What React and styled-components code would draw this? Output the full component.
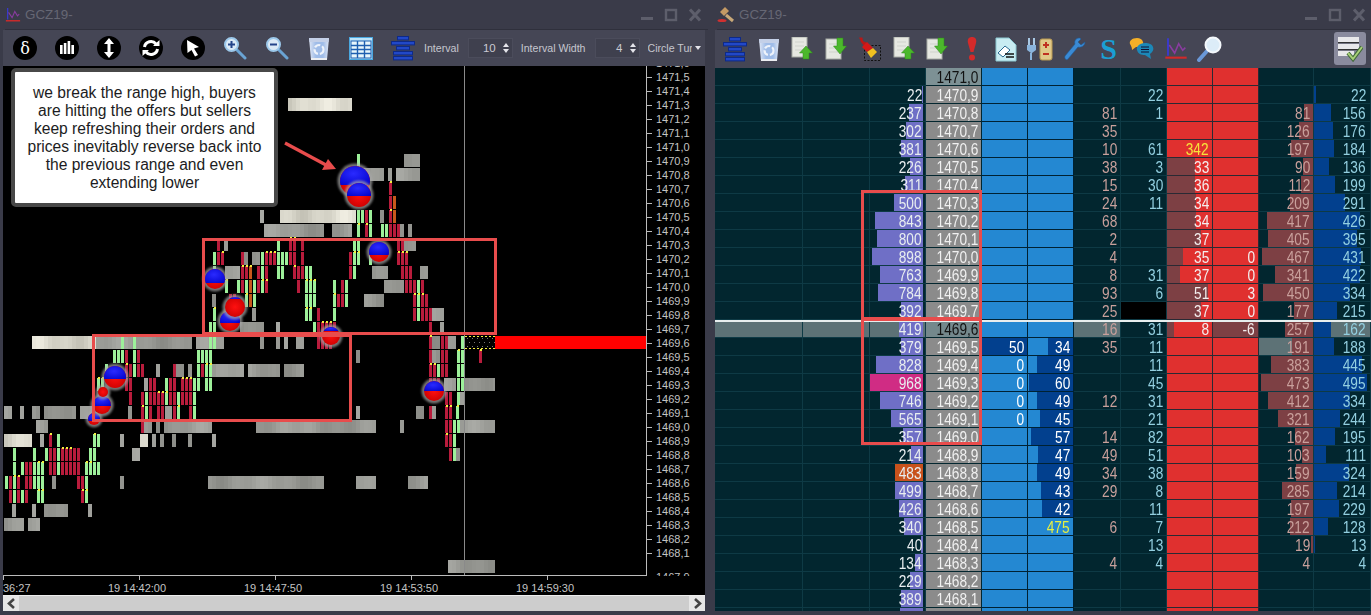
import React from 'react';
import styled, { createGlobalStyle } from 'styled-components';

const Global = createGlobalStyle`
  html, body { margin: 0; padding: 0; width: 1371px; height: 615px; overflow: hidden; background: #2e2f3b; }
  #root { width: 1371px; height: 615px; }
  * { box-sizing: border-box; }
`;

const UI = `"Liberation Sans", Arial, sans-serif`;

const Page = styled.div`display: flex; width: 1371px; height: 615px; font-family: ${UI};`;
const Win = styled.section`
  display: flex; flex-direction: column; height: 615px; background: #3a3b49;
  width: ${p => p.$w}px; padding: 0 ${p => p.$pr}px 4px ${p => p.$pl}px;
`;
const TitleBar = styled.header`
  display: flex; align-items: center; height: 30px; flex: none; margin-left: ${p => p.$ml}px;
  border-bottom: 1px solid #2f303c; margin-right: -3px;
`;
const TitleText = styled.span`font-size: 13.4px; color: #666774; margin-left: 4px;`;
const WinBtns = styled.div`display: flex; gap: 12px; margin-left: auto; margin-right: ${p => p.$mr}px; align-items: center;`;
const Toolbar = styled.div`
  display: flex; align-items: center; flex: none; height: ${p => p.$h}px; background: #454655;
  padding-left: ${p => p.$pl}px; position: relative;
`;
const Slot = styled.div`width: ${p => p.$w}px; flex: none; display: flex; align-items: center; justify-content: center;`;
const Round = styled.div`
  width: 24px; height: 24px; border-radius: 50%; background: #000; color: #fff; display: flex;
  align-items: center; justify-content: center; font: 16px "DejaVu Serif", serif;
`;
const Lbl = styled.span`font-size: 10.6px; color: #c6c7cf; margin-left: ${p => p.$ml}px; white-space: nowrap;`;
const Spin = styled.div`
  display: flex; align-items: center; justify-content: flex-end; width: 45px; height: 20px; margin-left: ${p => p.$ml}px;
  background: #3f404e; border: 1px solid #4b4c5b; font-size: 11.5px; color: #c9cad2; padding-right: 3px; gap: 7px;
`;
const SpinArrows = styled.span`display: flex; flex-direction: column; gap: 2px; align-items: center;`;
const Tri = styled.i`
  display: block; width: 0; height: 0; border-left: 3px solid transparent; border-right: 3px solid transparent;
  ${p => p.$up ? 'border-bottom: 4px solid #e4e4ea;' : 'border-top: 4px solid #e4e4ea;'}
`;
const Combo = styled.div`
  display: flex; align-items: center; margin-left: 8px; width: 53px; justify-content: space-between;
  font-size: 10.6px; color: #c6c7cf;
`;
const ComboText = styled.span`width: 44px; overflow: hidden; white-space: nowrap;`;
const ChartRow = styled.div`display: flex; height: 510px; flex: none; background: #000;`;
const Plot = styled.div`position: relative; width: 644px; height: 510px; flex: none; border-right: 1px solid #bbb; border-bottom: 1px solid #bbb;`;
const Axis = styled.div`flex: 1; overflow: hidden; height: 510px; position: relative;`;
const AxisList = styled.div`margin-top: -10px;`;
const AxisLab = styled.div`
  display: flex; align-items: center; height: 14px; font-size: 11px; color: #c4c4c4; white-space: nowrap;
  &::before { content: ''; width: 5px; height: 1px; background: #bbb; margin-right: 4px; }
`;
const Clip = styled.div`position: absolute; left: 0; bottom: 0; height: 6px; overflow: hidden;`;
const TimeAxis = styled.div`
  position: relative; height: 19px; flex: none; background: #000; font-size: 11px; color: #c4c4c4;
  display: grid; grid-template-columns: repeat(5, 136px); padding-top: 6px;
`;
const TimeTick = styled.div`
  white-space: nowrap; position: relative;
  &::before { content: ''; position: absolute; left: 0; top: -6px; width: 1px; height: 4px; background: #bbb; }
`;
const TimeText = styled.span`display: block; margin-left: ${p => p.$ml}px;`;
const Scroll = styled.div`
  height: 16px; flex: none; display: flex; justify-content: space-between; background: #cdcdcd; border-top: 1px solid #eee;
`;
const ScrollBtn = styled.div`width: 16px; display: flex; align-items: center; justify-content: center; background: #e6e6e6;`;
const Callout = styled.div`
  position: absolute; left: 8px; top: 2px; width: 267px; height: 139px; background: #fff; border: 4px solid #484848; border-radius: 5px;
  color: #1c1c22; font-size: 15.6px; line-height: 18px; text-align: center; padding: 12px 0 0; white-space: nowrap;
`;

const Ladder = styled.div`position: relative; flex: 1; overflow: hidden; background: #02262f;`;
const Row = styled.div`
  display: grid; height: 18px; position: relative;
  grid-template-columns: 88px 67px 56px 56px 46px 46px 47px 46px 46px 46px 55px 57px;
  ${p => p.$cur ? `&::after { content: ''; position: absolute; left: 0; right: 0; top: 0; height: 2px; background: #e8eeee; }` : ''}
`;
const Cell = styled.div`
  display: flex; align-items: center; justify-content: flex-end; padding-right: ${p => p.$pr ?? 3}px; overflow: hidden; white-space: nowrap;
  height: 18px; font-size: 16.5px; line-height: 18px;
  color: ${p => p.$c || '#e8eef0'};
  background-color: ${p => p.$bg || '#02262f'};
  background-repeat: no-repeat; background-image: ${p => p.$bar ? `linear-gradient(${p.$bar},${p.$bar})` : 'none'};
  background-position: ${p => p.$left ? 'left' : 'right'} top;
  border-right: 1px solid #0e3a45; border-bottom: 1px solid #0e3a45;
`;
const Num = styled.span`display: inline-block; transform: scaleX(.83); transform-origin: right center;`;
const Vol = styled(Cell)`background-position: right 2px top 0;`;
const Price = styled(Cell)`
  background-color: ${p => p.$top ? '#7d9195' : p.$cur ? '#74888c' : '#8b8b8b'}; color: ${p => p.$dark ? '#111' : '#f0f0f0'};
  border-right: 1px solid #02262f; border-bottom: 1px solid #02262f;
`;
const Blue = styled(Cell)`
  background-color: #2488d2; border-right: 1px solid #023; border-bottom: 1px solid #023; color: #fff;
`;
const Red = styled(Cell)`background-color: #e0302f; border-right: 1px solid #2a2a34; border-bottom: 1px solid #2a2a34; color: #f3eeee;`;
const Gray = '#5d7276';
const Mark = styled.div`
  position: absolute; left: 146px; top: ${p => p.$t}px; height: ${p => p.$h}px; width: 121px; border: 3px solid #e84c4c; pointer-events: none;
`;
const ChartSvg = styled.svg`display: block;`;
const CheckBtn = styled.div`
  position: absolute; right: 5px; top: 2px; width: 32px; height: 33px; background: #8a8b9e; border-radius: 3px; display: flex;
  align-items: center; justify-content: center;
`;

/* ------- chart data ------- */
const D = {
  14713: { l: [[288, 352]] },
  14709: { v: [[357, 360]], g: [[404, 420]] },
  14708: { g: [[363, 384], [388, 392], [396, 420]] },
  14707: { r: [[389, 392]] },
  14706: { r: [[389, 392]], o: [[393, 396]] },
  14705: { g: [[260, 264], [380, 384]], l: [[280, 356]], v: [[357, 364], [369, 372]], r: [[365, 368], [389, 392]], o: [[393, 396]] },
  14704: { g: [[264, 324], [332, 352], [400, 404], [408, 412]], v: [[357, 360], [369, 372], [381, 388]], r: [[365, 368], [389, 400]] },
  14703: { r: [[217, 220], [289, 296], [301, 304], [397, 403]], g: [[224, 228], [404, 416]], v: [[277, 280], [353, 360]] },
  14702: { v: [[213, 216], [261, 264], [277, 288], [353, 360], [369, 372]], r: [[217, 224], [241, 244], [265, 276], [289, 296], [301, 304], [349, 352], [397, 408]], g: [[244, 248], [252, 260]] },
  14701: { v: [[213, 216], [261, 264], [277, 285], [305, 312], [353, 356]], g: [[225, 240], [372, 388], [420, 428]], r: [[241, 248], [257, 260], [265, 268], [293, 304], [349, 352], [401, 412]], o: [[249, 252]] },
  14700: { v: [[225, 228], [237, 240], [245, 248], [253, 256], [261, 264], [305, 316], [333, 336], [345, 348], [417, 420]], r: [[241, 244], [257, 260], [265, 268], [297, 300], [341, 344], [405, 416], [421, 424]], o: [[249, 252]], g: [[384, 404]] },
  14699: { g: [[212, 216], [364, 384]], r: [[229, 236], [337, 344], [413, 416], [421, 428]], v: [[245, 248], [253, 256], [305, 316], [333, 336], [345, 348], [417, 420]], o: [[249, 252]] },
  14698: { v: [[213, 216], [305, 312], [333, 336], [417, 420]], g: [[252, 256], [432, 444]], r: [[317, 320], [413, 416], [421, 432]] },
  14697: { v: [[209, 216], [313, 316]], g: [[240, 264], [276, 280], [440, 444]], r: [[317, 320], [321, 334], [429, 432]] },
  14696: { l: [[32, 96]], g: [[96, 192], [196, 224], [260, 264], [276, 280], [284, 288], [296, 304], [432, 440], [448, 456]], v: [[121, 124], [133, 136], [209, 216], [461, 464]], r: [[317, 333], [429, 432], [441, 448]] },
  14695: { v: [[113, 120], [121, 124], [133, 136], [197, 204], [205, 212], [457, 464]], r: [[125, 128], [137, 140], [429, 432], [441, 448], [479, 482]], g: [[356, 360], [432, 440]] },
  14694: { v: [[105, 108], [133, 136], [197, 200], [205, 212], [437, 440], [457, 464]], r: [[125, 132], [137, 144], [173, 176], [201, 204], [429, 436], [441, 448]], g: [[156, 160], [176, 184], [188, 192], [212, 244], [248, 280], [284, 304]] },
  14693: { v: [[97, 103], [165, 168], [193, 200], [205, 212], [457, 464]], r: [[125, 132], [149, 156], [169, 176], [181, 192], [429, 440]], g: [[144, 148], [444, 456], [465, 495]] },
  14692: { r: [[129, 132], [141, 144], [149, 164], [169, 176], [181, 192], [445, 452]], v: [[145, 148], [165, 168], [177, 180], [193, 196], [457, 460]], g: [[460, 464]] },
  14691: { g: [[4, 12], [20, 24], [32, 40], [44, 76], [80, 92], [128, 132], [165, 172], [356, 360], [416, 424], [432, 436]], r: [[141, 144], [149, 152], [157, 164], [173, 176], [189, 192], [429, 432], [445, 452]], v: [[145, 148], [177, 180], [193, 196], [456, 460]] },
  14690: { g: [[36, 48], [144, 152], [156, 160], [164, 212], [256, 376], [400, 404], [460, 495]], r: [[141, 144], [445, 452]], v: [[453, 460]] },
  14689: { l: [[4, 32], [140, 148]], g: [[40, 44], [120, 124], [152, 156], [160, 164], [172, 176], [188, 192], [212, 216]], r: [[49, 52], [445, 452]], v: [[57, 60], [93, 100], [453, 456]] },
  14688: { v: [[13, 16], [33, 36], [45, 48], [57, 60], [89, 96], [453, 456]], r: [[49, 56], [61, 80], [449, 452]], g: [[132, 140], [456, 460]] },
  14687: { v: [[13, 16], [21, 24], [33, 45], [57, 60], [85, 88], [89, 100]], r: [[25, 32], [49, 56], [61, 80]] },
  14686: { v: [[5, 8], [13, 16], [33, 44], [85, 88]], r: [[9, 12], [17, 20], [25, 32], [77, 84]], g: [[52, 56], [120, 124], [208, 324], [356, 376], [408, 428]] },
  14685: { r: [[9, 12], [17, 20], [25, 28], [81, 84]], v: [[13, 16], [21, 24], [37, 44], [85, 88]] },
  14684: { g: [[12, 16], [32, 36], [44, 68], [88, 92]] },
  14683: { g: [[4, 24], [28, 40]] },
  14680: { g: [[448, 495]] },
};
const SP = [
  [355, 181, 15, 4], [359, 195, 12, 1], [379, 252, 10, 3], [215, 279, 10, 4], [230, 321, 10, 2],
  [235, 307, 10, -8], [331, 336, 9, -5], [434, 391, 10, 0], [94, 419, 6, 2], [102, 405, 9, 1], [115, 377, 11, 2], [103, 392, 5, 9],
];
const ry = p => 77 + (14715 - p) * 14 - 7;
const shade = (x, p, light) => {
  const n = Math.sin(x * 0.07 + p) + Math.sin(x * 0.23 + p * 2) * 0.6;
  if (light) {
    const v = Math.round(218 + n * 14);
    return `rgb(${v},${v - 2},${v - 14})`;
  }
  const v = Math.round(153 + n * 10);
  return `rgb(${v},${v + 1},${v - 4})`;
};

function ChartBars() {
  const out = [];
  Object.entries(D).forEach(([k, row]) => {
    const p = +k, y = ry(p);
    [['g', false], ['l', true]].forEach(([t, light]) => (row[t] || []).forEach(([a, b]) => {
      for (let x = a; x < b; x += 4) {
        out.push(<rect key={`${k}${t}${x}`} x={x} y={y} width={Math.min(4, b - x)} height={13} fill={shade(x, p, light)} />);
      }
    }));
    [['r', '#b81c3c'], ['v', '#9df09a'], ['o', '#c8581c']].forEach(([t, col]) => (row[t] || []).forEach(([a, b]) => {
      for (let x = a; x < b; x += 4) {
        out.push(<rect key={`${k}${t}${x}`} x={x} y={y} width={3} height={13} fill={col} />);
        if ((x * 3 + p * 5) % 11 < 3) out.push(<rect key={`${k}${t}${x}d`} x={x + 1} y={y - 1} width={2} height={2} fill="#f4ef40" />);
      }
    }));
  });
  return out;
}
function Sphere({ c: [x, y, r, d] }) {
  const a = Math.sqrt(Math.max(0, r * r - d * d));
  return (
    <g>
      <circle cx={x} cy={y} r={r + 2.5} fill="#a8a8a8" opacity=".7" filter="url(#halo)" />
      <circle cx={x} cy={y} r={r} fill="url(#sr)" />
      <path d={`M${x - a} ${y + d}A${r} ${r} 0 ${d > 0 ? 1 : 0} 1 ${x + a} ${y + d}Z`} fill="url(#sb)" />
    </g>
  );
}
function ChartDrawing() {
  const dots = [];
  for (let yy = 338; yy < 349; yy += 4) for (let xx = 467 + ((yy - 338) % 8 ? 2 : 0); xx < 495; xx += 5) dots.push(<rect key={`${xx}-${yy}`} x={xx} y={yy} width={1} height={1} fill="#777" />);
  return (
    <ChartSvg width="643" height="509" viewBox="3 66 643 509">
      <defs>
        <radialGradient id="sb" cx=".45" cy=".4" r=".8"><stop offset="0" stopColor="#2a2aff" /><stop offset="1" stopColor="#0000c8" /></radialGradient>
        <radialGradient id="sr" cx=".5" cy=".5" r=".6"><stop offset="0" stopColor="#ff1010" /><stop offset="1" stopColor="#c80000" /></radialGradient>
        <filter id="halo" x="-30%" y="-30%" width="160%" height="160%"><feGaussianBlur stdDeviation="1" /></filter>
      </defs>
      <ChartBars />
      <rect x="495" y="336" width="152" height="13" fill="#ff0000" />
      <path d="M465 336.5H495M465 348.5H495" stroke="#f4ef40" strokeDasharray="2 2" />
      {dots}
      <line x1="464.5" y1="66" x2="464.5" y2="576" stroke="#8a8a8a" />
      {SP.map((c, i) => <Sphere key={i} c={c} />)}
      <rect x="203.5" y="239.5" width="292" height="94" fill="none" stroke="#e84c4c" strokeWidth="3" />
      <rect x="93.5" y="335.5" width="257" height="85" fill="none" stroke="#e84c4c" strokeWidth="3" />
      <path d="M285 143L326 165" stroke="#e84c4c" strokeWidth="3.2" fill="none" />
      <path d="M336 169L322 170L328 159Z" fill="#e84c4c" />
    </ChartSvg>
  );
}

/* ------- icons ------- */
const Win3 = () => (
  <svg width="60" height="14" viewBox="0 0 60 14" fill="none" stroke="#5d5e6b">
    <path d="M0 10.5H12" strokeWidth="3" />
    <rect x="25" y="2" width="10" height="10" strokeWidth="2.4" />
    <path d="M49 1.5L59 12.5M59 1.5L49 12.5" strokeWidth="3" />
  </svg>
);
const LogoChart = ({ s = 16 }) => (
  <svg width={s} height={s} viewBox="0 0 18 18" fill="none">
    <path d="M3 1V14" stroke="#3a3ad0" strokeWidth="1.4" />
    <path d="M1 15.5H17" stroke="#d02a2a" strokeWidth="1.6" />
    <path d="M4 6L8 12L11 5L14 10L16 8" stroke="#8a3ca0" strokeWidth="1.2" />
  </svg>
);
const Gavel = () => (
  <svg width="18" height="18" viewBox="0 0 18 18">
    <path d="M9 9L16 15" stroke="#c8a878" strokeWidth="3" />
    <path d="M3 6L8 1L12 5L7 10Z" fill="#c49a64" />
    <ellipse cx="5" cy="14.5" rx="4.5" ry="1.6" fill="#d03030" />
  </svg>
);
const BarsIc = () => <svg width="16" height="16" viewBox="0 0 16 16" fill="#fff"><rect x="1" y="5" width="2.6" height="9" /><rect x="4.8" y="3" width="2.6" height="11" /><rect x="8.6" y="1" width="2.6" height="13" /><rect x="12.4" y="5" width="2.6" height="9" /></svg>;
const UpDownIc = () => <svg width="16" height="20" viewBox="0 0 16 20" fill="#fff"><path d="M8 0L13 6H9.5V14H13L8 20L3 14H6.5V6H3Z" /></svg>;
const RefreshIc = () => (
  <svg width="18" height="18" viewBox="0 0 18 18" fill="none" stroke="#fff" strokeWidth="3">
    <path d="M2.5 8A6.5 6.5 0 0 1 14 5" /><path d="M15.5 10A6.5 6.5 0 0 1 4 13" />
    <path d="M11 7L17.5 7L17.5 1Z" fill="#fff" stroke="none" /><path d="M7 11L.5 11L.5 17Z" fill="#fff" stroke="none" />
  </svg>
);
const CursorIc = () => <svg width="16" height="18" viewBox="0 0 16 18" fill="#fff"><path d="M2 1L14 8L9 9.5L13 16L10 17.5L6.5 11L2.5 14Z" /></svg>;
const Mag = ({ sign }) => (
  <svg width="24" height="24" viewBox="0 0 24 24" fill="none">
    <path d="M13 13L22 22" stroke="#6aa4d4" strokeWidth="3" strokeLinecap="round" />
    <circle cx="8.5" cy="8.5" r="6.5" fill="#dbeaf6" stroke="#9cc8ea" strokeWidth="2" />
    <path d={sign === '+' ? 'M5 8.5H12M8.5 5V12' : 'M5 8.5H12'} stroke="#24458a" strokeWidth="2" />
  </svg>
);
const Bin = ({ id }) => (
  <svg width="22" height="25" viewBox="0 0 22 25">
    <defs>
      <linearGradient id={id}><stop offset="0" stopColor="#dfe6f4" /><stop offset=".35" stopColor="#9fbce8" /><stop offset=".7" stopColor="#9fbce8" /><stop offset="1" stopColor="#dfe6f4" /></linearGradient>
    </defs>
    <path d="M1 2H21L19 24H3Z" fill={`url(#${id})`} />
    <path d="M1 2H21L20.5 6H1.5Z" fill="#c4d0e8" />
    <circle cx="11" cy="13.5" r="4.5" fill="none" stroke="#eef3fb" strokeWidth="2.2" strokeDasharray="6 2" />
    <path d="M3 24H19V22H3Z" fill="#eceef2" />
  </svg>
);
const GridIc = () => (
  <svg width="24" height="23" viewBox="0 0 24 23">
    <rect x=".5" y=".5" width="23" height="22" fill="#bde4fa" stroke="#4aa8e0" />
    <rect x="2" y="4" width="20" height="17" fill="#e8f6fc" stroke="#1f5fb0" />
    <path d="M2 8.5H22M2 12.5H22M2 16.5H22M8.5 4V21M15.5 4V21" stroke="#1f5fb0" strokeWidth="1.4" />
  </svg>
);
const StackIc = () => (
  <svg width="24" height="25" viewBox="0 0 24 25">
    {[[6, 0, 12], [0, 5, 24], [5, 10, 14], [2, 15, 20], [2, 20, 20]].map(([x, y, w], i) => (
      <rect key={i} x={x + .5} y={y + .5} width={w - 1} height="3.4" fill="#2148c8" stroke="#0e2a88" />
    ))}
  </svg>
);
const DocArrow = ({ up }) => (
  <svg width="22" height="24" viewBox="0 0 22 24">
    <g transform={up ? 'translate(0,0)' : 'translate(0,2)'}>
      <rect x="1" y="0" width="15" height="20" fill="#e6e8e2" stroke="#a8aca6" />
      <path d="M4 5H13M4 9H13M4 13H13" stroke="#cfd2cc" />
    </g>
    {up ? <path d="M15 9L21.5 16H18V22H12V16H8.5Z" fill="#4cb82c" stroke="#2a8818" strokeWidth=".5" /> : <path d="M15 17L21.5 9H18V1H12V9H8.5Z" fill="#4cb82c" stroke="#2a8818" strokeWidth=".5" />}
  </svg>
);
const Brush = () => (
  <svg width="24" height="24" viewBox="0 0 24 24">
    <rect x="6.5" y="8.5" width="16" height="15" fill="none" stroke="#111" strokeDasharray="2 1.5" />
    <path d="M1 0.5L4.5 0.5L5 4L9 6L6 9L3 5Z" fill="#b81818" />
    <path d="M4 10L9 5L15 11L9 15Z" fill="#d41818" />
    <path d="M9 15L15 11L19 15L13 21Z" fill="#f0c020" />
  </svg>
);
const Excl = () => <svg width="12" height="24" viewBox="0 0 12 24" fill="#d42a2a"><path d="M6 0C9 0 11 2 10 6L7.5 15H4.5L2 6C1 2 3 0 6 0Z" /><circle cx="6" cy="20.5" r="3" /></svg>;
const Eraser = () => (
  <svg width="22" height="25" viewBox="0 0 22 25">
    <path d="M1 1H14L21 8V24H1Z" fill="#c8ecf2" stroke="#8cc8d2" />
    <path d="M3 16L10 9L15 13L8 20Z" fill="#fff" stroke="#2a6a90" />
    <path d="M10 17H19M11 20H19" stroke="#111" strokeWidth="1.4" />
  </svg>
);
const Plug = () => (
  <svg width="28" height="24" viewBox="0 0 28 24">
    <path d="M3 1V8M8 1V8" stroke="#a8c8e4" strokeWidth="2" /><path d="M1 8H10V13L6 16H5L1 13Z" fill="#8ab4dc" /><path d="M5 16V23" stroke="#8ab4dc" strokeWidth="2" />
    <rect x="14" y="2" width="12" height="21" rx="2" fill="#e0c888" stroke="#b89850" />
    <path d="M17 8H23M20 5V11M17 17H23" stroke="#c03020" strokeWidth="2" />
  </svg>
);
const Wrench = () => <svg width="22" height="24" viewBox="0 0 22 24"><path d="M15 1C12 1 10 4 11 7L1 19C0 21 2 24 4 22L14 10C18 11 21 8 21 5L17 8L14 5L17 2C16 1 16 1 15 1Z" fill="#3a8ad4" stroke="#1f5a98" strokeWidth=".6" /></svg>;
const STxt = styled.span`font: bold 30px "Liberation Serif", serif; color: #1a9fd4; line-height: 30px;`;
const Chat = () => (
  <svg width="26" height="24" viewBox="0 0 26 24">
    <path d="M8 1C3 1 0 4 1 7C2 9 3 10 3 13L7 10C12 10 15 8 14 5C13 2 11 1 8 1Z" fill="#f4b028" />
    <path d="M16 6C10 6 7 10 8 13C9 17 12 18 16 18L22 22L21 17C24 15 25 12 24 10C23 7 20 6 16 6Z" fill="#1c88b8" />
    <path d="M12 10H20M12 12.5H20M12 15H20" stroke="#113" strokeWidth="1.2" />
  </svg>
);
const Lens = () => (
  <svg width="26" height="26" viewBox="0 0 26 26" fill="none">
    <path d="M2 24L10 15" stroke="#6a98d8" strokeWidth="4" strokeLinecap="round" />
    <circle cx="16" cy="9" r="7.5" fill="#dcecf8" stroke="#f4f8fc" strokeWidth="2" />
  </svg>
);
const CheckIc = () => (
  <svg width="26" height="26" viewBox="0 0 26 26">
    <rect x="1" y="1" width="21" height="5" fill="#e8e8ea" />
    <rect x="1" y="8" width="21" height="5" fill="#e8e8ea" />
    <rect x="1" y="15" width="16" height="5" fill="#e8e8ea" />
    <path d="M1 6.7H22M1 13.7H22" stroke="#333" strokeWidth="1.2" />
    <path d="M11 17L16 23L25 11" fill="none" stroke="#40683a" strokeWidth="4" /><path d="M11 17L16 23L25 11" fill="none" stroke="#a8d078" strokeWidth="2" />
  </svg>
);
const Lchev = ({ d }) => <svg width="9" height="11" viewBox="0 0 9 11" fill="none" stroke="#444" strokeWidth="2.6"><path d={d} /></svg>;

/* ------- ladder data ------- */
const L = [
  ['1471,0'],
  ['1470,9', 22, , , , 22, , , , 22],
  ['1470,8', 237, , , 81, 1, , , 81, 156],
  ['1470,7', 302, , , 35, , , , 126, 176],
  ['1470,6', 381, , , 10, 61, '342', , 197, 184],
  ['1470,5', 226, , , 38, 3, 33, , 90, 136],
  ['1470,4', 311, , , 15, 30, 36, , 112, 199],
  ['1470,3', 500, , , 24, 11, 34, , 209, 291],
  ['1470,2', 843, , , 68, , 34, , 417, 426],
  ['1470,1', 800, , , 2, , 37, , 405, 395],
  ['1470,0', 898, , , 4, , 35, 0, 467, 431],
  ['1469,9', 763, , , 8, 31, 37, 0, 341, 422],
  ['1469,8', 784, , , 93, 6, 51, 3, 450, 334],
  ['1469,7', 392, , , 25, 'black', 37, 0, 177, 215],
  ['1469,6', 419, , , 16, 31, 8, -6, 257, 162],
  ['1469,5', 379, 50, 34, 35, 11, , , 191, 188],
  ['1469,4', 828, 0, 49, , 11, , , 383, 445],
  ['1469,3', 968, 0, 60, , 45, , , 473, 495],
  ['1469,2', 746, 0, 49, 12, 31, , , 412, 334],
  ['1469,1', 565, 0, 45, , 21, , , 321, 244],
  ['1469,0', 357, , 57, 14, 82, , , 162, 195],
  ['1468,9', 214, , 47, 49, 51, , , 103, 111],
  ['1468,8', 483, , 49, 34, 38, , , 159, 324],
  ['1468,7', 499, , 43, 29, 8, , , 285, 214],
  ['1468,6', 426, , 42, , 11, , , 197, 229],
  ['1468,5', 340, , 475, 6, 7, , , 212, 128],
  ['1468,4', 40, , , , 13, , , 19, 13],
  ['1468,3', 134, , , 4, 4, , , 4, 4],
  ['1468,2', 229],
  ['1468,1', 389],
];
const RB = { 33: 28, 36: 28, 34: 29, 37: 34, 35: 16, 51: 41, 8: 7 };
const PINK = '#c9a09c', CY = '#93cfe0', MUTE = '#7d4044', DB = '#02408e';
const N = v => (v === undefined ? null : <Num>{v}</Num>);

function LadderRow({ r, i }) {
  const [price, vol, b1, b2, c1, c2, r1, r2, p, q] = r;
  const cur = price === '1469,6';
  const rowBg = cur ? Gray : undefined;
  const volBar = vol === 968 ? '#d02c84' : vol === 483 ? '#c8521c' : '#6f6fc6';
  const volW = Math.round((vol || 0) * 0.057);
  const b2W = b2 && b2 !== 475 ? Math.round(b2 * 0.74) : 0;
  const isY = r1 === '342';
  const r1W = isY ? 0 : (i === 11 ? 13 : RB[r1] || 0);
  const pW = Math.round((p || 0) * 0.11), qW = Math.round((q || 0) * 0.108);
  return (
    <Row $cur={cur}>
      <Cell $bg={rowBg} />
      <Cell $bg={rowBg} />
      <Vol $bg={rowBg} $bar={vol ? volBar : null} style={vol ? { backgroundSize: `${volW}px 17px` } : undefined}>{N(vol)}</Vol>
      <Price $cur={cur} $top={price === '1471,0'} $dark={cur || price === '1471,0'}>{N(price)}</Price>
      <Blue $bar={b1 === 50 ? DB : null} style={b1 === 50 ? { backgroundSize: '100% 17px' } : undefined}>{N(b1)}</Blue>
      <Blue $bar={b2W ? DB : null} style={{ backgroundSize: `${b2W}px 17px`, color: b2 === 475 ? '#e8f040' : undefined }}>{N(b2)}</Blue>
      <Cell $c={PINK} $bg={cur ? Gray : undefined}>{N(c1)}</Cell>
      <Cell $c={CY} $bg={c2 === 'black' ? '#000' : undefined}>{c2 === 'black' ? null : N(c2)}</Cell>
      <Red $left $bar={r1W ? MUTE : null} style={{ backgroundSize: `${r1W}px 17px`, color: isY ? '#f6e23a' : undefined }}>{N(r1)}</Red>
      <Red $left $bar={r2 === -6 ? MUTE : null} style={{ backgroundSize: '100% 17px' }}>{N(r2)}</Red>
      <Cell $c={PINK} $bar={p ? MUTE : null} $bg={p === 191 ? Gray : undefined} style={{ backgroundSize: p === 191 ? '21px 17px' : `${pW}px 17px` }}>{N(p)}</Cell>
      <Cell $c={CY} $pr={4} $left $bar={q ? DB : null} $bg={q === 162 ? Gray : undefined} style={{ backgroundSize: `${qW}px 17px` }}>{N(q)}</Cell>
    </Row>
  );
}
const SliverRow = () => (
  <Row>
    <Cell /><Cell /><Vol $bar="#6f6fc6" style={{ backgroundSize: '23px 17px' }} /><Price /><Blue /><Blue /><Cell /><Cell /><Red /><Red /><Cell /><Cell />
  </Row>
);

const axisVals = [];
for (let p = 14716; p >= 14681; p--) axisVals.push(`${Math.floor(p / 10)},${p % 10}`);
const slots = (list) => list.map(([w, el], i) => <Slot key={i} $w={w}>{el}</Slot>);

export default function App() {
  return (
    <Page>
      <Global />
      <Win $w={710} $pl={3} $pr={5}>
        <TitleBar $ml={2}>
          <LogoChart /><TitleText>GCZ19-</TitleText>
          <WinBtns $mr={7}><Win3 /></WinBtns>
        </TitleBar>
        <Toolbar $h={36} $pl={1}>
          {slots([
            [42, <Round>δ</Round>], [42, <Round><BarsIc /></Round>], [42, <Round><UpDownIc /></Round>], [42, <Round><RefreshIc /></Round>], [42, <Round><CursorIc /></Round>],
            [42, <Mag sign="+" />], [42, <Mag sign="-" />], [42, <Bin id="binA" />], [42, <GridIc />], [42, <StackIc />],
          ])}
          <Lbl $ml={0}>Interval</Lbl>
          <Spin $ml={9}>10<SpinArrows><Tri $up /><Tri /></SpinArrows></Spin>
          <Lbl $ml={8}>Interval Width</Lbl>
          <Spin $ml={9}>4<SpinArrows><Tri $up /><Tri /></SpinArrows></Spin>
          <Combo><ComboText>Circle Tur</ComboText><Tri /></Combo>
        </Toolbar>
        <ChartRow>
          <Plot>
            <ChartDrawing />
            <Callout>
              we break the range high, buyers<br />
              are hitting the offers but sellers<br />
              keep refreshing their orders and<br />
              prices inevitably reverse back into<br />
              the previous range and even<br />
              extending lower
            </Callout>
          </Plot>
          <Axis>
            <AxisList>{axisVals.map(v => <AxisLab key={v}>{v}</AxisLab>)}</AxisList>
            <Clip><AxisLab>1467,9</AxisLab></Clip>
          </Axis>
        </ChartRow>
        <TimeAxis>
          <TimeTick><TimeText $ml={0}>36:27</TimeText></TimeTick>
          {['19 14:42:00', '19 14:47:50', '19 14:53:50', '19 14:59:30'].map(t => <TimeTick key={t}><TimeText $ml={-31}>{t}</TimeText></TimeTick>)}
        </TimeAxis>
        <Scroll>
          <ScrollBtn><Lchev d="M7 1L2 5.5L7 10" /></ScrollBtn>
          <ScrollBtn><Lchev d="M2 1L7 5.5L2 10" /></ScrollBtn>
        </Scroll>
      </Win>
      <Win $w={661} $pl={5} $pr={0}>
        <TitleBar $ml={2}>
          <Gavel /><TitleText>GCZ19-</TitleText>
          <WinBtns $mr={9}><Win3 /></WinBtns>
        </TitleBar>
        <Toolbar $h={38} $pl={3}>
          {slots([
            [34, <StackIc />], [33, <Bin id="binB" />], [34, <DocArrow up />], [34, <DocArrow />], [34, <Brush />], [33, <DocArrow up />], [34, <DocArrow />],
            [35, <Excl />], [33, <Eraser />], [35, <Plug />], [35, <Wrench />], [33, <STxt>S</STxt>], [34, <Chat />], [34, <LogoChart s={24} />], [34, <Lens />],
          ])}
          <CheckBtn><CheckIc /></CheckBtn>
        </Toolbar>
        <Ladder>
          {L.map((r, i) => <LadderRow key={r[0]} r={r} i={i} />)}
          <SliverRow />
          <Mark $t={122} $h={130} />
          <Mark $t={250} $h={127} />
        </Ladder>
      </Win>
    </Page>
  );
}
